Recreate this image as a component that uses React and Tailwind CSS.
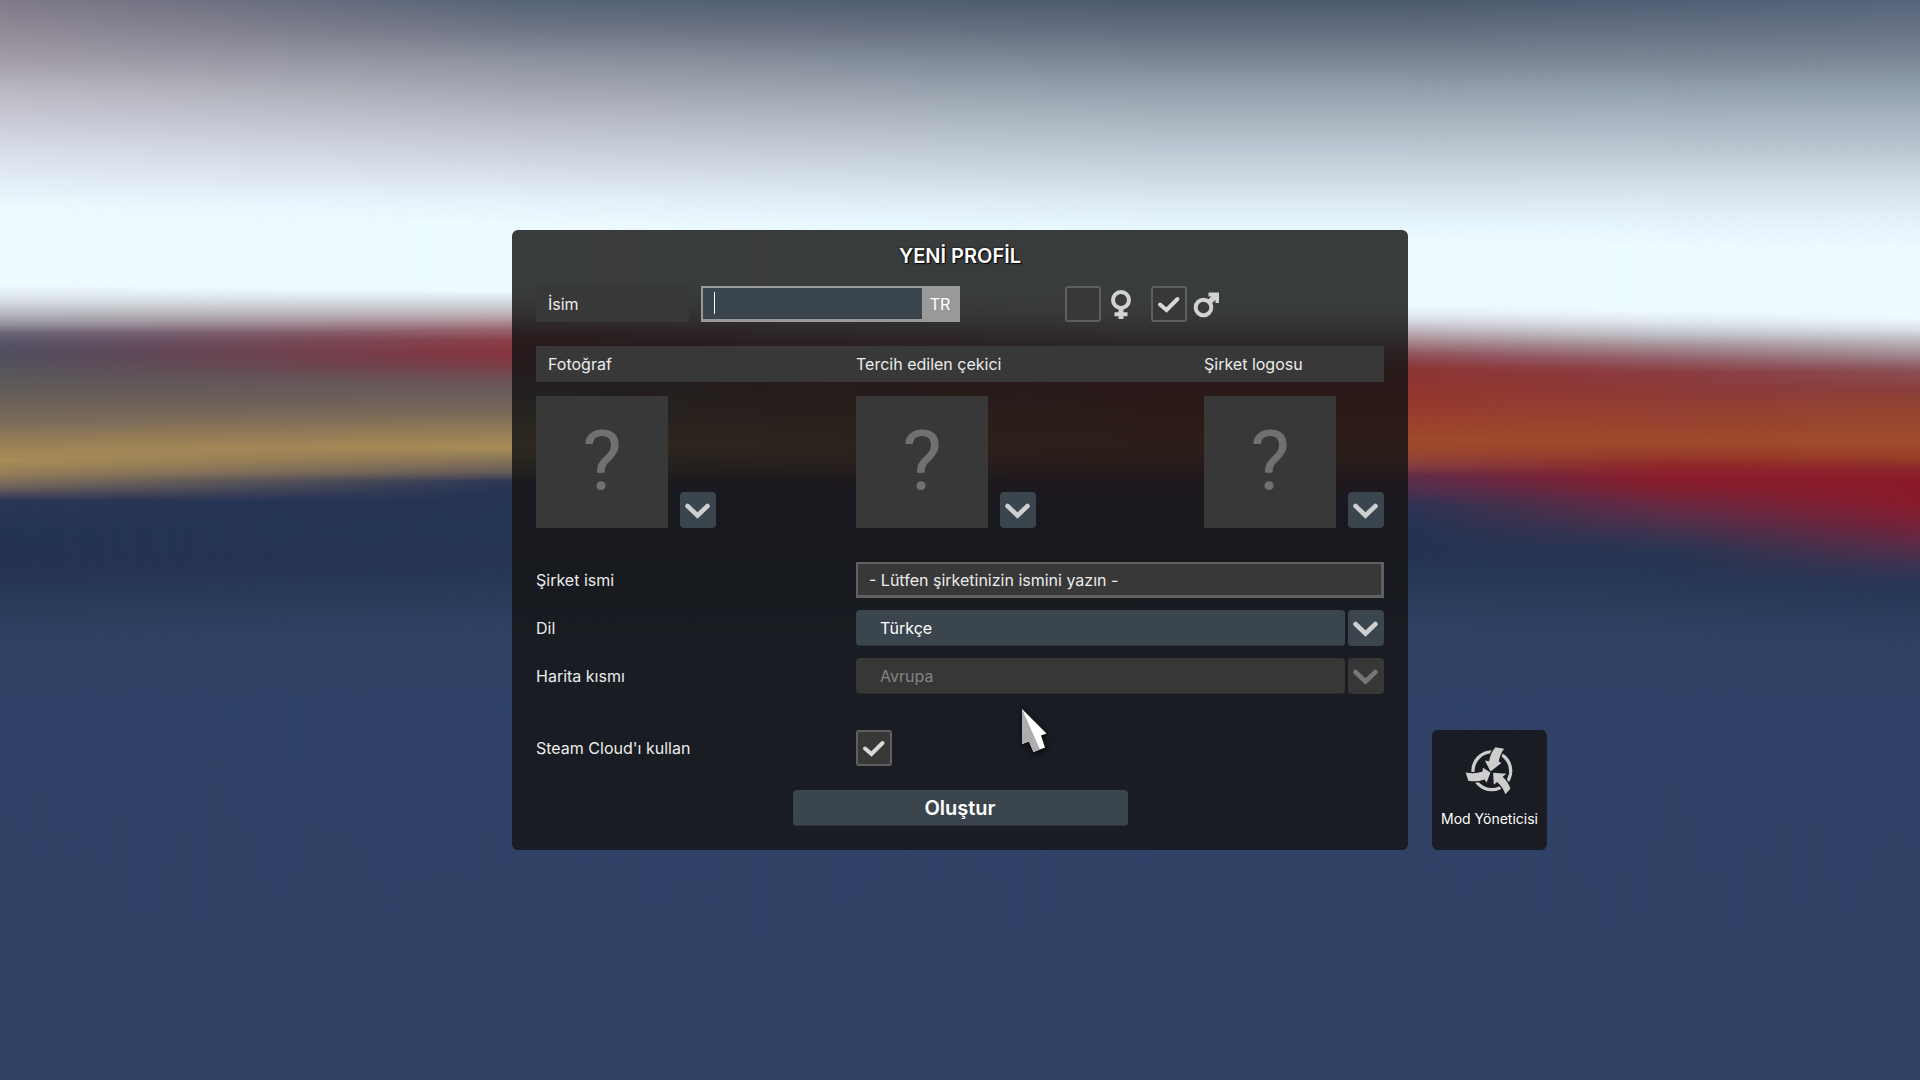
import { useState } from "react";

const Chevron = ({ className = "text-[#cfcfcf]" }) => (
  <svg viewBox="0 0 36 36" className={`h-9 w-9 ${className}`} aria-hidden="true">
    <path d="M7.5 14 L17.5 23.5 L27.5 14" fill="none" stroke="currentColor" strokeWidth="4.6" strokeLinecap="round" />
  </svg>
);

const FemaleIcon = () => (
  <svg viewBox="0 0 30 36" className="h-9 w-[30px]" aria-hidden="true">
    <circle cx="16" cy="14" r="8" fill="none" stroke="#d2d2d2" strokeWidth="4" />
    <path d="M13.5 23h5v3.2h4v4h-4V33h-5v-2.8h-4v-4h4z" fill="#d2d2d2" />
  </svg>
);

const MaleIcon = () => (
  <svg viewBox="0 0 30 36" className="h-9 w-[30px]" aria-hidden="true">
    <circle cx="12.5" cy="21.5" r="7.8" fill="none" stroke="#d2d2d2" strokeWidth="4" />
    <path d="M17.5 6.5h10.5V17H24.500v-3l-5 4.500-3.800-3.800L20.500 10.500H17.500z" fill="#d2d2d2" />
  </svg>
);

const ModIcon = () => (
  <svg viewBox="136 76 148 148" className="h-[49px] w-[49px]" aria-hidden="true">
    <circle cx="217" cy="151" r="57" fill="none" stroke="#cdcdcd" strokeWidth="10" />
    <g fill="#cdcdcd" stroke="#191c20" strokeWidth="8" paintOrder="stroke">
      <path d="M228 80L254 84Q241 102 238 123L246 127L213 153L196 120L209 122Q213 96 228 80Z" />
      <path d="M138 156Q165 162 189 153L190 142L213 156L201 187L195 177Q170 186 146 181Z" />
      <path d="M258 222Q250 200 233 185L223 193L221 157L261 160L250 169Q268 187 273 205Z" />
    </g>
  </svg>
);

const Cursor = () => (
  <svg
    viewBox="0 0 34 50"
    className="pointer-events-none absolute left-[508px] top-[477px] h-[50px] w-[34px] drop-shadow-[1px_3px_3px_rgba(0,0,0,0.7)]"
    aria-hidden="true"
  >
    <path d="M2 2L26.5 26.5L21 28.5L25 40.5L13.5 45L9 34.5L2 37Z" fill="#fff" />
    <path d="M2 2L20 42.5L13.5 45L9 34.5L2 37Z" fill="#adadad" />
  </svg>
);

// blurred scenery: vertical colour strips faded into each other
const Background = () => (
  <div className="absolute inset-0 -z-10">
    <div className="absolute inset-0 bg-[linear-gradient(#807a8a_0%,#8c8592_1.9%,#a39da9_5.6%,#bab9c3_8.3%,#c9cad6_11.1%,#d8deea_13.9%,#e3edf6_16.7%,#edfbff_19.4%,#edfbff_26.4%,#dde3ec_27.6%,#c3c5ca_28.7%,#91909c_30.1%,#6b6577_30.8%,#565468_31.8%,#524f60_32.9%,#5a585c_35%,#6a5f5a_37%,#796a5a_38.9%,#957c57_40.7%,#a98c56_42.6%,#927c59_44%,#6e625b_45.1%,#4b4759_45.8%,#2a3656_46.4%,#243452_49.1%,#253450_52.8%,#2a3a5a_55.6%,#304263_59.3%,#304267_65%,#304165_100%)]" />
    <div className="absolute inset-0 bg-[linear-gradient(#566478_0%,#707686_2.8%,#8e94a0_5.6%,#a4a7b2_8.3%,#babdc8_11.1%,#cbd1dc_13.9%,#dce4ee_16.7%,#e4f1fa_18.5%,#edfbff_20.8%,#edfbff_26.9%,#d8dee6_27.8%,#c5c2c8_28.7%,#b3979f_29.6%,#97606a_30.6%,#8c4049_31.5%,#88353f_32.6%,#7d3d46_33.8%,#6d5156_35.2%,#6a5b5b_36.3%,#776758_38%,#937b58_39.8%,#a98c56_41.5%,#867357_42.6%,#665b59_43.7%,#2c3655_44.6%,#253454_45.4%,#253452_52%,#2a3a5a_55%,#304263_58.5%,#304267_65%,#304165_100%)] mask-[linear-gradient(to_right,transparent_0%,black_26.7%)]" />
    <div className="absolute inset-0 bg-[linear-gradient(#4c596d_0%,#646e80_2.8%,#7b8795_5.6%,#93a0ad_8.3%,#a8b5bf_11.1%,#bcc8d3_13.9%,#cedbe4_16.7%,#dbe8f0_18.5%,#e6f5fe_20.8%,#edfbff_22.2%,#edfbff_28.2%,#e0e4ec_29.4%,#cdc9d1_30.1%,#b5a4ab_31%,#a17c82_31.9%,#91505a_32.9%,#8c3636_34.1%,#92362f_36.1%,#9b402d_38.9%,#a04a2b_40.9%,#984632_42.1%,#7f3c42_43.3%,#632d48_44%,#4c3050_45.4%,#2d3454_46.8%,#243352_49.1%,#253452_51.9%,#2a3a5a_54.6%,#304263_58%,#304267_65%,#304165_100%)] mask-[linear-gradient(to_right,transparent_26.7%,black_60%)]" />
    <div className="absolute inset-0 bg-[linear-gradient(#505e73_0%,#667184_2.8%,#7b8796_5.6%,#93a0ae_8.3%,#a9b5c1_11.1%,#bbc7d2_13.9%,#cfdce5_16.7%,#dae8f0_18.5%,#e5f3fd_20.8%,#edfbff_22.8%,#edfbff_28.8%,#dde3ec_29.9%,#bfbfc6_31%,#a8949a_31.9%,#93606a_33.2%,#8b3c40_34.5%,#8d3a37_36.3%,#974230_38.9%,#a04b2c_40.9%,#963c2b_42.1%,#8f2929_43.1%,#8a1c2b_44.2%,#84202f_45%,#6b2840_46.6%,#552f4a_48%,#3d334f_49.4%,#293553_50.9%,#253552_52.3%,#2a3a5a_55.3%,#304263_59%,#304267_65%,#304165_100%)] mask-[linear-gradient(to_right,transparent_73.3%,black_86.7%)]" />
    <div className="absolute inset-0 bg-[linear-gradient(#56647a_0%,#687386_2.8%,#7c8897_5.6%,#92a0ae_8.3%,#a9b5c4_11.1%,#bac6d0_13.9%,#cfdce6_16.7%,#d9e7f0_18.5%,#e4f2fc_20.8%,#edfbff_23.1%,#edfbff_29.4%,#dde3ec_30.4%,#beb9be_31.5%,#a08890_32.9%,#8a5056_34.3%,#8a3f3c_36.1%,#954530_38%,#a04c2d_41%,#973a28_42.6%,#8a242a_43.5%,#8b1a29_44.4%,#8a1a29_46.3%,#782138_48.6%,#5c2c47_50.5%,#3d3350_52.3%,#273555_54.2%,#2c3d5e_57.5%,#304263_60%,#304267_65%,#304165_100%)] mask-[linear-gradient(to_right,transparent_86.7%,black_100%)]" />
  </div>
);

const CheckBox = ({ id, label, checked, onChange, type = "checkbox", name }) => (
  <span className="relative inline-block h-9 w-9">
    <input
      id={id}
      name={name}
      type={type}
      checked={checked}
      onChange={onChange}
      aria-label={label}
      className="peer block h-9 w-9 appearance-none rounded-[3px] border-2 border-[#5f5f5f] bg-[#383838]"
    />
    <svg viewBox="0 0 36 36" className="pointer-events-none absolute inset-0 hidden peer-checked:block" aria-hidden="true">
      <path d="M9 18.5L15.5 24L26.5 13" fill="none" stroke="#d8d8d8" strokeWidth="4" strokeLinecap="round" />
    </svg>
  </span>
);

const Picker = ({ label }) => (
  <div className="flex items-end gap-3">
    <div className="flex h-[132px] w-[132px] items-center justify-center bg-[#383838] font-['Roboto',sans-serif] text-[84px] leading-none text-[#707070]">
      ?
    </div>
    <button type="button" aria-label={label} className="h-9 w-9 rounded bg-[#3b454d]">
      <Chevron />
    </button>
  </div>
);

const SelectRow = ({ id, label, value, disabled }) => (
  <div className="grid grid-cols-[320px_1fr] items-center">
    <label htmlFor={id}>{label}</label>
    <div className="flex gap-[3px]">
      <select
        id={id}
        disabled={disabled}
        className="h-9 flex-1 appearance-none rounded bg-[#3b454d] px-6 text-white opacity-100 shadow-[inset_0_-1px_0_#2c353c] disabled:bg-[#373737] disabled:text-[#848484] disabled:shadow-[inset_0_-1px_0_#2b2b2b]"
      >
        <option>{value}</option>
      </select>
      <button
        type="button"
        disabled={disabled}
        aria-label={label}
        className="h-9 w-9 rounded bg-[#3b454d] disabled:bg-[#373737]"
      >
        <Chevron className={disabled ? "text-[#777777]" : "text-[#cfcfcf]"} />
      </button>
    </div>
  </div>
);

export default function App() {
  const [name, setName] = useState("");
  const [company, setCompany] = useState("- Lütfen şirketinizin ismini yazın -");
  const [gender, setGender] = useState("male");
  const [cloud, setCloud] = useState(true);

  return (
    <div className="relative isolate grid min-h-screen grid-cols-[1fr_auto_1fr] content-center items-end font-['Inter',sans-serif] text-base text-[#ececec]">
      <Background />

      <form
        className="relative col-start-2 w-4xl rounded-md bg-[rgb(20_20_20/0.83)] px-6 pb-6 pt-3"
        onSubmit={(e) => e.preventDefault()}
      >
        <h1 className="text-center text-xl leading-7 font-semibold text-white [text-shadow:0_0_2px_#000,1px_1px_1px_#000]">
          YENİ PROFİL
        </h1>

        {/* name + gender */}
        <div className="mt-4 flex items-center">
          <label htmlFor="name" className="flex h-9 w-[153px] items-center bg-[#383838] px-3">
            İsim
          </label>
          <div className="relative ml-3 flex h-9 w-[259px] border-2 border-b-3 border-[#999999] bg-[#999999]">
            <input
              id="name"
              type="text"
              value={name}
              onChange={(e) => setName(e.target.value)}
              className="min-w-0 flex-1 bg-[#3b454d] px-3 text-white caret-transparent outline-none"
            />
            <span className="absolute left-[11px] top-1 h-[22px] w-px bg-white" />
            <span className="flex w-9 items-center justify-center text-white">TR</span>
          </div>
          <div className="ml-[105px] flex items-center">
            <CheckBox
              id="female"
              name="gender"
              type="radio"
              label="Kadın"
              checked={gender === "female"}
              onChange={() => setGender("female")}
            />
            <label htmlFor="female" className="ml-1 mr-4">
              <FemaleIcon />
            </label>
            <CheckBox
              id="male"
              name="gender"
              type="radio"
              label="Erkek"
              checked={gender === "male"}
              onChange={() => setGender("male")}
            />
            <label htmlFor="male" className="ml-1">
              <MaleIcon />
            </label>
          </div>
        </div>

        <div className="mt-6 grid h-9 grid-cols-[320px_1fr_180px] items-center bg-[#383838]">
          <span className="pl-3">Fotoğraf</span>
          <span>Tercih edilen çekici</span>
          <span>Şirket logosu</span>
        </div>
        <div className="mt-3.5 grid grid-cols-[320px_1fr_180px]">
          <Picker label="Fotoğraf" />
          <Picker label="Tercih edilen çekici" />
          <Picker label="Şirket logosu" />
        </div>

        <div className="mt-[34px] flex flex-col gap-3">
          <div className="grid grid-cols-[320px_1fr] items-center">
            <label htmlFor="company">Şirket ismi</label>
            <input
              id="company"
              type="text"
              value={company}
              onChange={(e) => setCompany(e.target.value)}
              className="h-9 border-2 border-r-3 border-b-3 border-[#616161] bg-[#383838] px-[11px] outline-none"
            />
          </div>
          <SelectRow id="language" label="Dil" value="Türkçe" />
          <SelectRow id="map" label="Harita kısmı" value="Avrupa" disabled />
        </div>

        <div className="mt-9 grid grid-cols-[320px_1fr] items-center">
          <label htmlFor="cloud">Steam Cloud'ı kullan</label>
          <CheckBox id="cloud" checked={cloud} onChange={() => setCloud(!cloud)} />
        </div>

        <button
          type="submit"
          className="mx-auto mt-6 block h-9 w-[335px] rounded bg-[#3b454d] text-xl font-semibold text-white shadow-[inset_0_-1px_0_#2c353c]"
        >
          Oluştur
        </button>

        <Cursor />
      </form>

      <button
        type="button"
        className="ml-6 flex h-[120px] w-[115px] flex-col items-center rounded-md bg-[rgb(20_20_20/0.83)] pt-4 text-sm text-white"
      >
        <ModIcon />
        <span className="mt-3.5">Mod Yöneticisi</span>
      </button>
    </div>
  );
}
